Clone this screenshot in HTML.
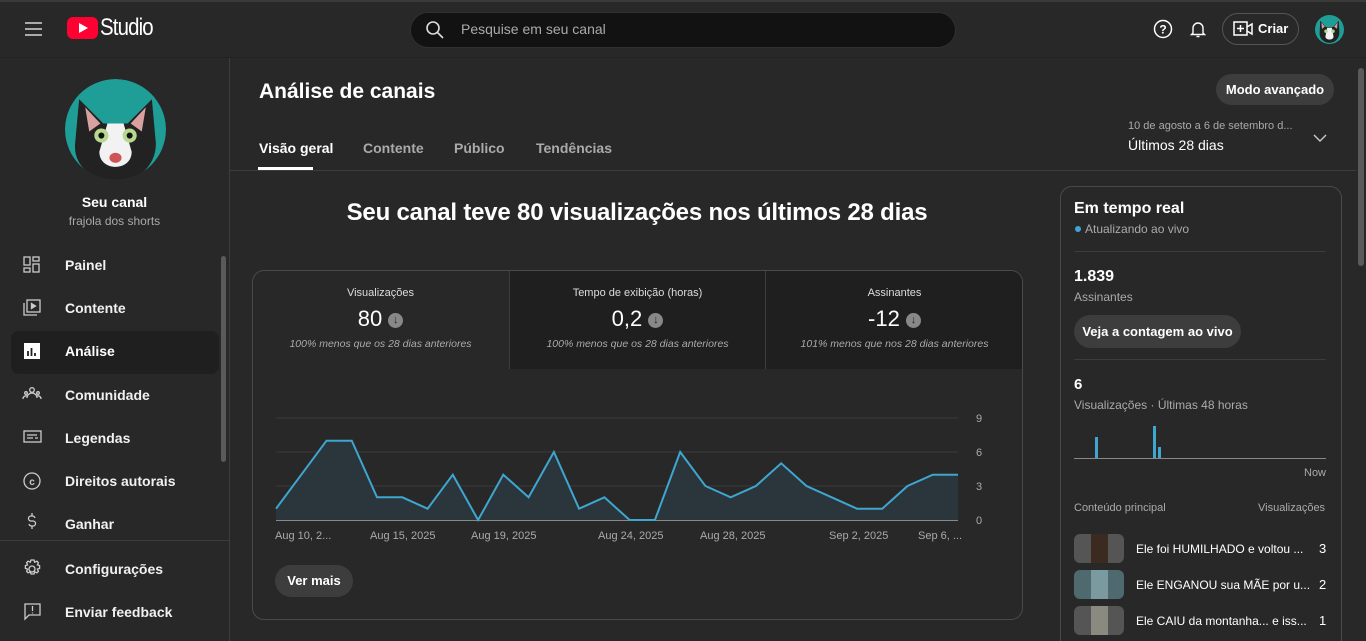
<!DOCTYPE html>
<html><head><meta charset="utf-8"><style>
*{box-sizing:border-box;margin:0;padding:0}
html,body{width:1366px;height:641px;overflow:hidden}
body{background:#282828;font-family:"Liberation Sans",Roboto,sans-serif;color:#fff;position:relative}
.a{position:absolute}
.hdr{left:0;top:0;width:1366px;height:58px;background:#282828;border-top:2px solid #3a3a3a;border-bottom:1px solid #222}
.nav{font-size:14px;font-weight:bold;color:#f1f1f1}
.gray{color:#aaa}
.tab{font-size:14px;font-weight:bold;top:140px}
.t12{font-size:12px}
</style></head><body>
<div class="a hdr"></div>
<div class="a" style="left:25px;top:22px;width:17px;height:2px;background:#aaa"></div>
<div class="a" style="left:25px;top:28px;width:17px;height:2px;background:#aaa"></div>
<div class="a" style="left:25px;top:34px;width:17px;height:2px;background:#aaa"></div>
<div class="a" style="left:67px;top:17px;width:31px;height:22px;background:#ff0033;border-radius:6px"></div>
<div class="a" style="left:79px;top:23px;width:0;height:0;border-left:9px solid #fff;border-top:5px solid transparent;border-bottom:5px solid transparent"></div>
<div class="a" style="left:100px;top:14px;font-size:24px;letter-spacing:-1px;transform:scaleX(.85);transform-origin:left">Studio</div>
<div class="a" style="left:410px;top:12px;width:546px;height:36px;background:#121212;border-radius:18px;border:1px solid #303030"></div>
<svg class="a" style="left:425px;top:20px" width="20" height="20"><circle cx="8" cy="8" r="6" fill="none" stroke="#ddd" stroke-width="1.6"/><line x1="12.5" y1="12.5" x2="18" y2="18" stroke="#ddd" stroke-width="1.6"/></svg>
<div class="a" style="left:461px;top:21px;font-size:14px;color:#aaa">Pesquise em seu canal</div>
<svg class="a" style="left:1153px;top:19px" width="20" height="20"><circle cx="10" cy="10" r="8.5" fill="none" stroke="#fff" stroke-width="1.5"/><text x="10" y="14.5" font-size="12" text-anchor="middle" fill="#fff" font-family="Liberation Sans" font-weight="bold">?</text></svg>
<svg class="a" style="left:1188px;top:19px" width="20" height="20"><path d="M5 14V9a5 5 0 0 1 10 0v5l1.5 1.5h-13z" fill="none" stroke="#fff" stroke-width="1.4"/><path d="M8.5 17.5h3" stroke="#fff" stroke-width="1.4"/></svg>
<div class="a" style="left:1222px;top:13px;width:77px;height:32px;border:1px solid #555;border-radius:16px"></div>
<svg class="a" style="left:1233px;top:20px" width="20" height="18"><rect x="1" y="2" width="13" height="13" fill="none" stroke="#fff" stroke-width="1.5"/><path d="M14 7l5-3v10l-5-3M7.5 5v7M4 8.5h7" fill="none" stroke="#fff" stroke-width="1.5"/></svg>
<div class="a" style="left:1258px;top:21px;font-size:13px;font-weight:bold">Criar</div>
<svg class="a" style="left:1315px;top:15px" width="29" height="29" viewBox="0 0 100 100"><circle cx="50" cy="50" r="50" fill="#1f9e97"/><path d="M18 20l20 22h24l20-22 2 40c0 22-16 36-34 36S14 82 16 60z" fill="#222"/><path d="M22 26l12 14-10 8z M78 26l-12 14 10 8z" fill="#d99"/><path d="M42 44h16l6 30c0 14-28 14-28 0z" fill="#f2f2f2"/><circle cx="38" cy="56" r="6" fill="#b8d890"/><circle cx="62" cy="56" r="6" fill="#b8d890"/></svg>
<!-- sidebar -->
<div class="a" style="left:229px;top:58px;width:1px;height:583px;background:#3d3d3d"></div>
<svg class="a" style="left:65px;top:79px" width="101" height="101" viewBox="0 0 100 100"><defs><clipPath id="c"><circle cx="50" cy="50" r="50"/></clipPath></defs><g clip-path="url(#c)"><circle cx="50" cy="50" r="50" fill="#1f9e97"/><path d="M14 20l24 24h24l24-24 4 44c0 22-18 38-40 38S8 86 10 64z" fill="#222"/><path d="M20 28l15 16-11 8z M80 28l-15 16 11 8z" fill="#d9a0a0"/><path d="M42 44h16l8 28c0 20-32 20-32 0z" fill="#f2f2f2"/><circle cx="36" cy="56" r="7" fill="#b8d890"/><circle cx="64" cy="56" r="7" fill="#b8d890"/><circle cx="36" cy="56" r="3" fill="#111"/><circle cx="64" cy="56" r="3" fill="#111"/><ellipse cx="50" cy="78" rx="6" ry="5" fill="#c55"/></g></svg>
<div class="a" style="left:0;top:194px;width:229px;text-align:center;font-size:14px;font-weight:bold">Seu canal</div>
<div class="a gray" style="left:0;top:214px;width:229px;text-align:center;font-size:12px">frajola dos shorts</div>
<div class="a" style="left:11px;top:331px;width:208px;height:43px;background:#1f1f1f;border-radius:8px"></div>
<div class="a" style="left:221px;top:256px;width:5px;height:206px;background:#5a5a5a;border-radius:3px"></div>
<div class="a" style="left:0;top:540px;width:229px;height:1px;background:#3d3d3d"></div>
<svg class="a" style="left:22px;top:255px" width="22" height="380" fill="none" stroke="#ccc" stroke-width="1.3">
<rect x="2" y="2" width="6" height="8"/><rect x="11" y="2" width="6" height="4"/><rect x="2" y="13" width="6" height="4"/><rect x="11" y="9" width="6" height="8"/>
<rect x="5" y="45" width="13" height="12"/><path d="M2 48v12h13"/><path d="M9.5 48.5l4 2.5-4 2.5z" fill="#ccc"/>
<rect x="2" y="88" width="16" height="16" fill="#fff" stroke="none"/><path d="M6 101v-5M9.5 101v-8M13 101v-3" stroke="#1f1f1f" stroke-width="1.8"/>
<circle cx="10" cy="135" r="2.3"/><path d="M5 143a5 5 0 0 1 10 0"/><circle cx="4" cy="138" r="1.3"/><circle cx="16" cy="138" r="1.3"/><path d="M1 144a3 3 0 0 1 4-3M19 144a3 3 0 0 0-4-3"/>
<rect x="2" y="176" width="17" height="11"/><path d="M5 183h6M13 183h3M5 180h10"/>
<circle cx="10" cy="226" r="8"/><text x="10" y="230" font-size="10" fill="#ccc" stroke="none" text-anchor="middle" font-family="Liberation Sans" font-weight="bold">c</text>
<path d="M13 263a3 3 0 0 0-3-2h-1a2.5 2.5 0 0 0 0 5h2a2.5 2.5 0 0 1 0 5h-1a3 3 0 0 1-3-2M10 258v3M10 271v3"/>
<circle cx="10" cy="314" r="3"/><path d="M10 305l2 0 .7 2.2 2.2-1 1.5 1.5-1 2.2 2.2.7v2.8l-2.2.7 1 2.2-1.5 1.5-2.2-1-.7 2.2h-3l-.7-2.2-2.2 1-1.5-1.5 1-2.2-2.2-.7v-2.8l2.2-.7-1-2.2 1.5-1.5 2.2 1 .7-2.2z"/>
<path d="M3 349h15v11H7l-4 4z"/><path d="M10.5 351v5M10.5 357.5v1"/>
</svg>
<div class="a nav" style="left:65px;top:257px">Painel</div>
<div class="a nav" style="left:65px;top:300px">Contente</div>
<div class="a nav" style="left:65px;top:343px;color:#fff">Análise</div>
<div class="a nav" style="left:65px;top:387px">Comunidade</div>
<div class="a nav" style="left:65px;top:430px">Legendas</div>
<div class="a nav" style="left:65px;top:473px">Direitos autorais</div>
<div class="a nav" style="left:65px;top:516px">Ganhar</div>
<div class="a nav" style="left:65px;top:561px">Configurações</div>
<div class="a nav" style="left:65px;top:604px">Enviar feedback</div>
<!-- main -->
<div class="a" style="left:259px;top:80px;font-size:21px;font-weight:bold">Análise de canais</div>
<div class="a" style="left:1216px;top:74px;width:118px;height:31px;background:#3d3d3d;border-radius:16px;font-size:13px;font-weight:bold;text-align:center;line-height:31px">Modo avançado</div>
<div class="a gray" style="left:1128px;top:120px;font-size:11px">10 de agosto a 6 de setembro d...</div>
<div class="a" style="left:1128px;top:137px;font-size:14px">Últimos 28 dias</div>
<svg class="a" style="left:1313px;top:133px" width="14" height="10"><path d="M1 2l6 6 6-6" fill="none" stroke="#ccc" stroke-width="1.4"/></svg>
<div class="a tab" style="left:259px">Visão geral</div>
<div class="a tab gray" style="left:363px">Contente</div>
<div class="a tab gray" style="left:454px">Público</div>
<div class="a tab gray" style="left:536px">Tendências</div>
<div class="a" style="left:258px;top:167px;width:55px;height:3px;background:#fff"></div>
<div class="a" style="left:230px;top:170px;width:1126px;height:1px;background:#3d3d3d"></div>
<div class="a" style="left:1358px;top:68px;width:6px;height:198px;background:#5a5a5a;border-radius:3px"></div>
<div class="a" style="left:252px;top:199px;width:770px;text-align:center;font-size:24px;font-weight:bold;letter-spacing:-.2px">Seu canal teve 80 visualizações nos últimos 28 dias</div>
<div class="a" style="left:252px;top:270px;width:771px;height:350px;border:1px solid #4a4a4a;border-radius:12px;overflow:hidden">
  <div class="a" style="left:256px;top:0;width:514px;height:98px;background:#1f1f1f"></div>
  <div class="a" style="left:256px;top:0;width:1px;height:98px;background:#3d3d3d"></div>
  <div class="a" style="left:512px;top:0;width:1px;height:98px;background:#3d3d3d"></div>
</div>
<div class="a t12" style="left:252px;top:287px;width:257px;text-align:center;color:#ddd;font-size:11px">Visualizações</div>
<div class="a t12" style="left:509px;top:287px;width:257px;text-align:center;color:#ddd;font-size:11px">Tempo de exibição (horas)</div>
<div class="a t12" style="left:766px;top:287px;width:257px;text-align:center;color:#ddd;font-size:11px">Assinantes</div>
<div class="a" style="left:252px;top:306px;width:257px;text-align:center;font-size:22px">80 <span style="display:inline-block;width:15px;height:15px;border-radius:50%;background:#888;color:#222;font-size:11px;line-height:15px;vertical-align:3px;font-weight:bold">↓</span></div>
<div class="a" style="left:509px;top:306px;width:257px;text-align:center;font-size:22px">0,2 <span style="display:inline-block;width:15px;height:15px;border-radius:50%;background:#888;color:#222;font-size:11px;line-height:15px;vertical-align:3px;font-weight:bold">↓</span></div>
<div class="a" style="left:766px;top:306px;width:257px;text-align:center;font-size:22px">-12 <span style="display:inline-block;width:15px;height:15px;border-radius:50%;background:#888;color:#222;font-size:11px;line-height:15px;vertical-align:3px;font-weight:bold">↓</span></div>
<div class="a gray" style="left:252px;top:338px;width:257px;text-align:center;font-size:10.5px;font-style:italic">100% menos que os 28 dias anteriores</div>
<div class="a gray" style="left:509px;top:338px;width:257px;text-align:center;font-size:10.5px;font-style:italic">100% menos que os 28 dias anteriores</div>
<div class="a gray" style="left:766px;top:338px;width:257px;text-align:center;font-size:10.5px;font-style:italic">101% menos que nos 28 dias anteriores</div>
<svg class="a" style="left:0;top:0" width="1366" height="641">
<g stroke="#3a3a3a"><line x1="276" y1="418" x2="958" y2="418"/><line x1="276" y1="452" x2="958" y2="452"/><line x1="276" y1="486" x2="958" y2="486"/></g>
<polygon fill="#2a363b" points="276,520 276,508.7 301.3,474.7 326.5,440.7 351.8,440.7 377,497.3 402.3,497.3 427.6,508.7 452.8,474.7 478.1,520 503.3,474.7 528.6,497.3 553.9,452 579.1,508.7 604.4,497.3 629.6,520 654.9,520 680.2,452 705.4,486 730.7,497.3 755.9,486 781.2,463.3 806.5,486 831.7,497.3 857,508.7 882.2,508.7 907.5,486 932.8,474.7 958,474.7 958,520"/>
<line x1="276" y1="520.5" x2="958" y2="520.5" stroke="#888"/>
<polyline fill="none" stroke="#3ea6d0" stroke-width="2" points="276,508.7 301.3,474.7 326.5,440.7 351.8,440.7 377,497.3 402.3,497.3 427.6,508.7 452.8,474.7 478.1,520 503.3,474.7 528.6,497.3 553.9,452 579.1,508.7 604.4,497.3 629.6,520 654.9,520 680.2,452 705.4,486 730.7,497.3 755.9,486 781.2,463.3 806.5,486 831.7,497.3 857,508.7 882.2,508.7 907.5,486 932.8,474.7 958,474.7"/>
<g fill="#aaa" font-size="11" font-family="Liberation Sans">
<text x="976" y="422">9</text><text x="976" y="456">6</text><text x="976" y="490">3</text><text x="976" y="524">0</text>
<text x="275" y="539">Aug 10, 2...</text><text x="370" y="539">Aug 15, 2025</text><text x="471" y="539">Aug 19, 2025</text><text x="598" y="539">Aug 24, 2025</text><text x="700" y="539">Aug 28, 2025</text><text x="829" y="539">Sep 2, 2025</text><text x="918" y="539">Sep 6, ...</text>
</g>
<line x1="1074" y1="458.5" x2="1326" y2="458.5" stroke="#888"/>
<rect x="1095" y="437" width="3" height="21" fill="#3ea6d0"/><rect x="1153" y="426" width="3" height="32" fill="#3ea6d0"/><rect x="1158" y="447" width="3" height="11" fill="#3ea6d0"/>
</svg>
<div class="a" style="left:275px;top:565px;width:78px;height:32px;background:#3d3d3d;border-radius:16px;font-size:13px;font-weight:bold;text-align:center;line-height:32px">Ver mais</div>
<div class="a" style="left:1060px;top:186px;width:282px;height:470px;border:1px solid #4a4a4a;border-radius:12px"></div>
<div class="a" style="left:1074px;top:200px;font-size:16px;font-weight:bold">Em tempo real</div>
<div class="a" style="left:1075px;top:226px;width:6px;height:6px;border-radius:50%;background:#3ea6d0"></div>
<div class="a gray" style="left:1085px;top:222px;font-size:12px">Atualizando ao vivo</div>
<div class="a" style="left:1074px;top:251px;width:252px;height:1px;background:#3d3d3d"></div>
<div class="a" style="left:1074px;top:268px;font-size:16px;font-weight:bold">1.839</div>
<div class="a gray" style="left:1074px;top:290px;font-size:12px">Assinantes</div>
<div class="a" style="left:1074px;top:315px;width:167px;height:33px;background:#3d3d3d;border-radius:17px;font-size:13px;font-weight:bold;text-align:center;line-height:33px">Veja a contagem ao vivo</div>
<div class="a" style="left:1074px;top:359px;width:252px;height:1px;background:#3d3d3d"></div>
<div class="a" style="left:1074px;top:376px;font-size:15px;font-weight:bold">6</div>
<div class="a gray" style="left:1074px;top:398px;font-size:12px">Visualizações · Últimas 48 horas</div>
<div class="a gray" style="left:1304px;top:467px;font-size:11px">Now</div>
<div class="a gray" style="left:1074px;top:502px;font-size:11px">Conteúdo principal</div>
<div class="a gray" style="left:1258px;top:502px;font-size:11px">Visualizações</div>
<div class="a" style="left:1074px;top:534px;width:50px;height:29px;border-radius:6px;background:#555"><div style="margin-left:17px;width:17px;height:29px;background:#3a2a20"></div></div>
<div class="a" style="left:1074px;top:570px;width:50px;height:29px;border-radius:6px;background:#4f6a6e"><div style="margin-left:17px;width:17px;height:29px;background:#7a9aa0"></div></div>
<div class="a" style="left:1074px;top:606px;width:50px;height:29px;border-radius:6px;background:#555"><div style="margin-left:17px;width:17px;height:29px;background:#8a8a80"></div></div>
<div class="a" style="left:1136px;top:542px;font-size:12px">Ele foi HUMILHADO e voltou ...</div>
<div class="a" style="left:1136px;top:578px;font-size:12px">Ele ENGANOU sua MÃE por u...</div>
<div class="a" style="left:1136px;top:614px;font-size:12px">Ele CAIU da montanha... e iss...</div>
<div class="a" style="left:1319px;top:541px;font-size:13px">3</div>
<div class="a" style="left:1319px;top:577px;font-size:13px">2</div>
<div class="a" style="left:1319px;top:613px;font-size:13px">1</div>
</body></html>
